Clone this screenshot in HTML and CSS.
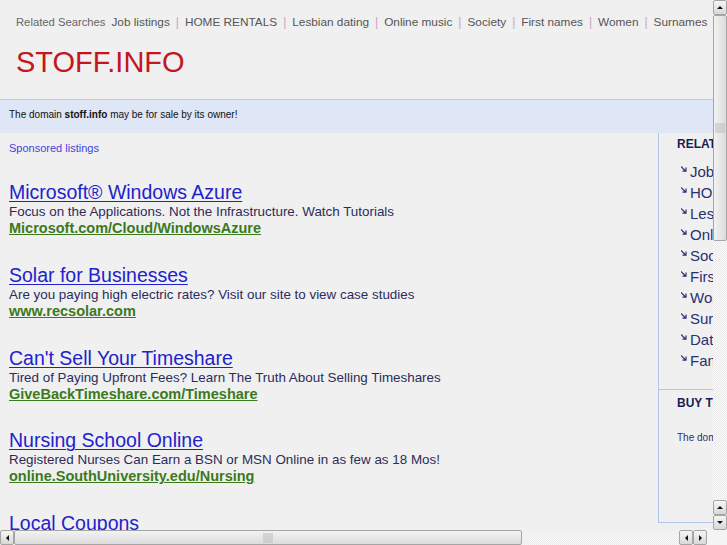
FILE: index.html
```html
<!DOCTYPE html>
<html>
<head>
    <title>stoff.info</title>
    <link rel="stylesheet" href="styles.css">
</head>
<body>
    <div class="frame">
        <div class="viewport">
            <div class="page">
                <!-- Header with related searches -->
                <header class="top">
                    <div class="related">
                        <span class="related-label">Related Searches</span>
                        <a href="#">Job listings</a><span class="sep">|</span>
                        <a href="#">HOME RENTALS</a><span class="sep">|</span>
                        <a href="#">Lesbian dating</a><span class="sep">|</span>
                        <a href="#">Online music</a><span class="sep">|</span>
                        <a href="#">Society</a><span class="sep">|</span>
                        <a href="#">First names</a><span class="sep">|</span>
                        <a href="#">Women</a><span class="sep">|</span>
                        <a href="#">Surnames</a>
                    </div>
                    <div class="logo">STOFF.INFO</div>
                </header>

                <div class="notice">The domain <b>stoff.info</b> may be for sale by its owner!</div>

                <div class="content">
                    <!-- Sponsored ads -->
                    <main class="listings">
                        <div class="sponsored">Sponsored listings</div>

                        <div class="ad">
                            <a class="ad-title" href="#">Microsoft® Windows Azure</a>
                            <div class="ad-text">Focus on the Applications. Not the Infrastructure. Watch Tutorials</div>
                            <a class="ad-url" href="#">Microsoft.com/Cloud/WindowsAzure</a>
                        </div>
                        <div class="ad">
                            <a class="ad-title" href="#">Solar for Businesses</a>
                            <div class="ad-text">Are you paying high electric rates? Visit our site to view case studies</div>
                            <a class="ad-url" href="#">www.recsolar.com</a>
                        </div>
                        <div class="ad">
                            <a class="ad-title" href="#">Can't Sell Your Timeshare</a>
                            <div class="ad-text">Tired of Paying Upfront Fees? Learn The Truth About Selling Timeshares</div>
                            <a class="ad-url" href="#">GiveBackTimeshare.com/Timeshare</a>
                        </div>
                        <div class="ad">
                            <a class="ad-title" href="#">Nursing School Online</a>
                            <div class="ad-text">Registered Nurses Can Earn a BSN or MSN Online in as few as 18 Mos!</div>
                            <a class="ad-url" href="#">online.SouthUniversity.edu/Nursing</a>
                        </div>
                        <div class="ad">
                            <a class="ad-title" href="#">Local Coupons</a>
                            <div class="ad-text">Get deals on restaurants, spas and more in your city</div>
                            <a class="ad-url" href="#">www.localcoupons.com</a>
                        </div>
                    </main>

                    <!-- Sidebar -->
                    <aside class="side">
                        <section class="side-box">
                            <h3>RELATED SEARCHES</h3>
                            <ul class="side-list">
                                <li><svg class="arr" width="6" height="6" viewBox="0 0 6 6"><path d="M0 0.5 L4.5 5 M5 1.5 L5 5.2 L1.5 5.2" stroke="#2a3070" stroke-width="1.2" fill="none"/></svg>Job listings</li>
                                <li><svg class="arr" width="6" height="6" viewBox="0 0 6 6"><path d="M0 0.5 L4.5 5 M5 1.5 L5 5.2 L1.5 5.2" stroke="#2a3070" stroke-width="1.2" fill="none"/></svg>HOME RENTALS</li>
                                <li><svg class="arr" width="6" height="6" viewBox="0 0 6 6"><path d="M0 0.5 L4.5 5 M5 1.5 L5 5.2 L1.5 5.2" stroke="#2a3070" stroke-width="1.2" fill="none"/></svg>Lesbian dating</li>
                                <li><svg class="arr" width="6" height="6" viewBox="0 0 6 6"><path d="M0 0.5 L4.5 5 M5 1.5 L5 5.2 L1.5 5.2" stroke="#2a3070" stroke-width="1.2" fill="none"/></svg>Online music</li>
                                <li><svg class="arr" width="6" height="6" viewBox="0 0 6 6"><path d="M0 0.5 L4.5 5 M5 1.5 L5 5.2 L1.5 5.2" stroke="#2a3070" stroke-width="1.2" fill="none"/></svg>Society</li>
                                <li><svg class="arr" width="6" height="6" viewBox="0 0 6 6"><path d="M0 0.5 L4.5 5 M5 1.5 L5 5.2 L1.5 5.2" stroke="#2a3070" stroke-width="1.2" fill="none"/></svg>First names</li>
                                <li><svg class="arr" width="6" height="6" viewBox="0 0 6 6"><path d="M0 0.5 L4.5 5 M5 1.5 L5 5.2 L1.5 5.2" stroke="#2a3070" stroke-width="1.2" fill="none"/></svg>Women</li>
                                <li><svg class="arr" width="6" height="6" viewBox="0 0 6 6"><path d="M0 0.5 L4.5 5 M5 1.5 L5 5.2 L1.5 5.2" stroke="#2a3070" stroke-width="1.2" fill="none"/></svg>Surnames</li>
                                <li><svg class="arr" width="6" height="6" viewBox="0 0 6 6"><path d="M0 0.5 L4.5 5 M5 1.5 L5 5.2 L1.5 5.2" stroke="#2a3070" stroke-width="1.2" fill="none"/></svg>Dating</li>
                                <li><svg class="arr" width="6" height="6" viewBox="0 0 6 6"><path d="M0 0.5 L4.5 5 M5 1.5 L5 5.2 L1.5 5.2" stroke="#2a3070" stroke-width="1.2" fill="none"/></svg>Family</li>
                            </ul>
                        </section>
                        <section class="side-box buy">
                            <h3>BUY THIS DOMAIN</h3>
                            <p>The domain stoff.info may be for sale by its owner!</p>
                        </section>
                    </aside>
                </div>
            </div>
        </div>

        <!-- Window scrollbars -->
        <div class="vscroll">
            <div class="sb-btn"><span class="tri up"></span></div>
            <div class="sb-thumb v"><span class="grip"></span></div>
            <div class="sb-track"></div>
            <div class="sb-btn"><span class="tri up"></span></div>
            <div class="sb-btn"><span class="tri down"></span></div>
        </div>
        <div class="hscroll">
            <div class="sb-btn h"><span class="tri left"></span></div>
            <div class="sb-thumb h"><span class="grip"></span></div>
            <div class="sb-track"></div>
            <div class="sb-btn h"><span class="tri left"></span></div>
            <div class="sb-btn h"><span class="tri right"></span></div>
            <div class="sb-gap"></div>
        </div>
        <div class="corner"></div>
    </div>
</body>
</html>
```

FILE: styles.css
```css
body {
    margin: 0;
    font-family: 'Liberation Sans', Arial, sans-serif;
    background-color: #f0f0f0;
}

a {
    text-decoration: none;
}

.frame {
    display: grid;
    grid-template-columns: 713px 14px;
    grid-template-rows: 530px 15px;
    width: 727px;
    height: 545px;
    overflow: hidden;
}

.viewport {
    overflow: hidden;
    background-color: #f0f0f0;
}

.page {
    width: 900px;
}

/* Header */
.top {
    height: 99px;
    border-bottom: 1px solid #b9c9e3;
}

.related {
    display: flex;
    align-items: baseline;
    padding: 15px 0 0 16px;
    white-space: nowrap;
    font-size: 11.8px;
    height: 15px;
}

.related-label {
    font-size: 11.25px;
    color: #666;
    margin-right: 6px;
}

.related a {
    color: #555;
}

.sep {
    color: #c9a3c3;
    margin: 0 6px;
    font-size: 12px;
}

.logo {
    margin: 16px 0 0 16px;
    font-size: 29px;
    color: #c4161c;
    line-height: 32px;
}

/* Domain notice */
.notice {
    height: 33px;
    line-height: 30px;
    padding-left: 9px;
    background-color: #dfe6f5;
    font-size: 10px;
    color: #111;
}

.content {
    display: flex;
}

/* Ads */
.listings {
    width: 649px;
    padding-left: 9px;
}

.sponsored {
    margin-top: 9px;
    font-size: 11px;
    color: #3f3fe0;
    margin-bottom: 27px;
}

.ad {
    display: flex;
    flex-direction: column;
    align-items: flex-start;
    margin-bottom: 26.8px;
}

.ad-title {
    font-size: 19.5px;
    line-height: 22px;
    color: #2222cc;
    text-decoration: underline;
    text-decoration-thickness: 1px;
    text-underline-offset: 2px;
}

.ad-text {
    font-size: 13.4px;
    line-height: 17px;
    color: #2c2c5a;
}

.ad-url {
    font-size: 14.5px;
    font-weight: bold;
    line-height: 17px;
    color: #3b7a1c;
    text-decoration: underline;
}

/* Sidebar */
.side {
    width: 230px;
    border-left: 1px solid #b3c5e8;
    border-bottom: 1px solid #b3c5e8;
    height: 389px;
    color: #283070;
}

.side-box {
    padding-left: 18px;
    border-bottom: 1px solid #b3c5e8;
    height: 256px;
}

.side-box h3 {
    margin: 0;
    padding-top: 4px;
    font-size: 12px;
    color: #1a1d55;
    white-space: nowrap;
}

.side-list {
    list-style: none;
    margin: 10px 0 0;
    padding: 0 0 0 4px;
}

.side-list li {
    display: flex;
    align-items: center;
    font-size: 15px;
    line-height: 21px;
    white-space: nowrap;
}

.arr {
    margin: 0 3px 6px 0;
}

.buy {
    border-bottom: none;
    height: auto;
}

.buy h3 {
    padding-top: 6px;
}

.buy p {
    margin: 22px 0 0;
    font-size: 10px;
    white-space: nowrap;
}

/* Scrollbars */
.vscroll {
    display: flex;
    flex-direction: column;
    background-color: #f4f4f4;
}

.hscroll {
    display: flex;
    background-color: #f4f4f4;
}

.corner {
    background-color: #f4f4f4;
}

.sb-track {
    flex: 1;
    background-image: repeating-conic-gradient(#f8f8f8 0 25%, #ececec 0 50%);
    background-size: 2px 2px;
}

.sb-btn {
    width: 12px;
    height: 13px;
    border: 1px solid #a5a5a5;
    border-radius: 2px;
    background: linear-gradient(#f6f6f6, #d8d8d8);
    display: flex;
    align-items: center;
    justify-content: center;
}

.sb-thumb {
    border: 1px solid #a5a5a5;
    border-radius: 2px;
    display: flex;
    align-items: center;
    justify-content: center;
}

.sb-thumb.v {
    height: 224px;
    background: linear-gradient(90deg, #f2f2f2, #dcdcdc);
}

.sb-thumb.h {
    width: 506px;
    background: linear-gradient(#f2f2f2, #dcdcdc);
}

.grip {
    width: 10px;
    height: 10px;
    background-image: radial-gradient(circle, #b8b8b8 0.6px, transparent 0.8px);
    background-size: 2px 2px;
}

.sb-gap {
    width: 6px;
}

.tri {
    width: 0;
    height: 0;
    border: 3px solid transparent;
}

.tri.up {
    border-bottom: 3px solid #111;
    border-top-width: 0;
}

.tri.down {
    border-top: 3px solid #111;
    border-bottom-width: 0;
}

.tri.left {
    border-right: 3px solid #111;
    border-left-width: 0;
}

.tri.right {
    border-left: 3px solid #111;
    border-right-width: 0;
}
```
